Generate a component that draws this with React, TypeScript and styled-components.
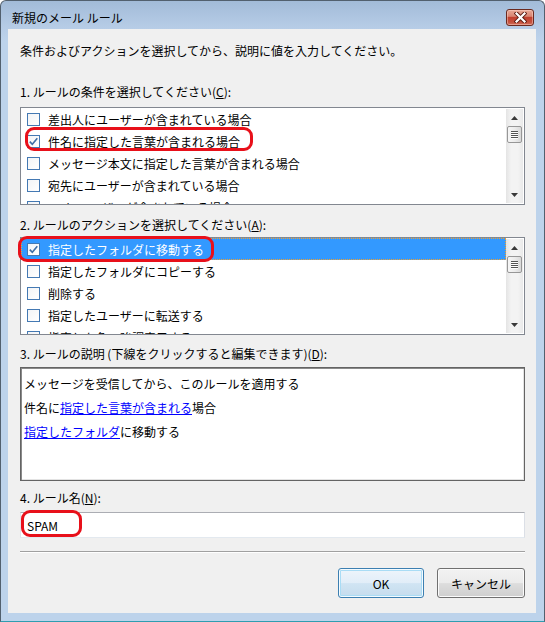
import React from 'react';
import styled, { createGlobalStyle } from 'styled-components';

const GlobalStyle = createGlobalStyle`
  html, body { margin: 0; padding: 0; background: #ffffff; }
  body {
    font-family: "Noto Sans CJK JP", "Noto Sans", "Liberation Sans", sans-serif;
    font-size: 12px;
    color: #000;
  }
  * { box-sizing: border-box; }
`;

const Window = styled.div`
  width: 545px;
  height: 622px;
  display: flex;
  flex-direction: column;
  border: 1px solid #52606e;
  border-bottom-color: #2f9db0;
  border-radius: 6px 6px 0 0;
  background: linear-gradient(to bottom, #a2bbd8 0px, #b6cce6 26px, #bdd3eb 40px, #bdd3eb 100%);
  overflow: hidden;
`;

const TitleBar = styled.div`
  height: 28px;
  display: flex;
  align-items: flex-start;
  padding: 9px 10px 0 11px;
`;

const TitleText = styled.div`
  line-height: 16px;
  font-size: 12px;
  color: #000;
`;

const CloseButton = styled.div`
  margin-left: auto;
  margin-top: -1px;
  width: 28px;
  height: 17px;
  border: 1px solid #6b2a1f;
  border-radius: 3px;
  background: linear-gradient(to bottom, #e9a996 0%, #d98572 42%, #c2412f 50%, #c4503d 80%, #d2715c 100%);
  box-shadow: inset 0 0 0 1px rgba(255, 220, 210, 0.45);
  display: flex;
  align-items: center;
  justify-content: center;
`;

const Body = styled.div`
  flex: 1;
  margin: 0 8px 8px 7px;
  background: #f0f0f0;
  padding: 14px 11px 0 12px;
  display: flex;
  flex-direction: column;
`;

const Text = styled.div<{ $mt?: number }>`
  line-height: 16px;
  margin-top: ${(p) => p.$mt ?? 0}px;
  white-space: nowrap;
`;

const Field = styled.div<{ $mt?: number }>`
  position: relative;
  margin-top: ${(p) => p.$mt ?? 0}px;
`;

const ListBox = styled.div`
  height: 98px;
  border: 1px solid #828790;
  background: #fff;
  display: flex;
  overflow: hidden;
`;

const Rows = styled.div`
  flex: 1;
  overflow: hidden;
`;

const Row = styled.div<{ $selected?: boolean }>`
  height: 22px;
  display: flex;
  align-items: center;
  gap: 8px;
  padding-left: 6px;
  white-space: nowrap;
  background: ${(p) => (p.$selected ? '#3399ff' : 'transparent')};
  color: ${(p) => (p.$selected ? '#ffffff' : '#000000')};
  outline: ${(p) => (p.$selected ? '1px dotted #f0a030' : 'none')};
  outline-offset: -1px;
`;

const Box = styled.span`
  flex: none;
  width: 13px;
  height: 13px;
  border: 1px solid #4479b3;
  background: linear-gradient(135deg, #f2f4f6, #ffffff);
  display: flex;
  align-items: center;
  justify-content: center;
`;

const ScrollBar = styled.div`
  width: 17px;
  margin: 1px 1px 1px 0;
  display: flex;
  flex-direction: column;
  background: linear-gradient(to right, #e4e4e4, #f3f3f3 30%, #f3f3f3 70%, #e9e9e9);
`;

const ArrowButton = styled.div`
  height: 17px;
  display: flex;
  align-items: center;
  justify-content: center;
`;

const Thumb = styled.div`
  height: 17px;
  margin: 0 1px;
  border: 1px solid #979797;
  border-radius: 2px;
  background: linear-gradient(to right, #f6f6f6, #ececec 50%, #d9d9d9);
  display: flex;
  flex-direction: column;
  align-items: center;
  justify-content: center;
  gap: 1px;
`;

const Grip = styled.span`
  width: 7px;
  height: 1px;
  background: #555;
  box-shadow: 0 1px 0 #fff;
`;

const Spacer = styled.div`
  flex: 1;
`;

const Ring = styled.div<{ $l: number; $t: number; $w: number; $h: number }>`
  position: absolute;
  left: ${(p) => p.$l}px;
  top: ${(p) => p.$t}px;
  width: ${(p) => p.$w}px;
  height: ${(p) => p.$h}px;
  border: 3px solid #e8101a;
  border-radius: 9px;
  pointer-events: none;
`;

const DescBox = styled.div`
  height: 114px;
  border: 1px solid #646464;
  box-shadow: inset 1px 1px 0 #8a8a8a, inset -1px -1px 0 #e3e3e3;
  background: #fff;
  padding: 4px 0 0 3px;
  line-height: 24px;
`;

const Link = styled.span`
  color: #0000ff;
  text-decoration: underline;
`;

const Input = styled.div`
  height: 26px;
  border: 1px solid #e3e9ef;
  border-top-color: #abadb3;
  border-left-color: #e2e3ea;
  border-right-color: #dbdfe6;
  background: #fff;
  padding-left: 6px;
  display: flex;
  align-items: center;
  font-size: 12px;
`;

const Separator = styled.div`
  margin-top: 13px;
  border-top: 1px solid #a0a0a0;
  border-bottom: 1px solid #ffffff;
`;

const ButtonRow = styled.div`
  margin-top: 15px;
  display: flex;
  justify-content: flex-end;
  gap: 13px;
`;

const Button = styled.div<{ $default?: boolean; $w: number }>`
  width: ${(p) => p.$w}px;
  height: 30px;
  border-radius: 3px;
  border: 1px solid ${(p) => (p.$default ? '#3c7fb1' : '#707070')};
  background: ${(p) =>
    p.$default
      ? 'linear-gradient(to bottom, #eef5fb 0%, #e1edf8 50%, #d0e4f3 52%, #c5dced 100%)'
      : 'linear-gradient(to bottom, #f2f2f2 0%, #ebebeb 50%, #dddddd 52%, #cfcfcf 100%)'};
  box-shadow: ${(p) =>
    p.$default ? 'inset 0 0 0 1px #f4fbff, inset 0 0 0 2px #a9dcf5' : 'inset 0 0 0 1px #fbfbfb'};
  display: flex;
  align-items: center;
  justify-content: center;
  font-size: 12px;
`;

const U = styled.span`
  text-decoration: underline;
`;

const Check = () => (
  <svg width="11" height="11" viewBox="0 0 11 11">
    <path d="M1.8 5.6 L4.3 8.3 L9.3 2.2" fill="none" stroke="#3f6ea6" strokeWidth="1.6" />
  </svg>
);

const UpArrow = () => (
  <svg width="7" height="4" viewBox="0 0 7 4">
    <path d="M0 4 L3.5 0 L7 4 Z" fill="#3a3a3a" />
  </svg>
);

const DownArrow = () => (
  <svg width="7" height="4" viewBox="0 0 7 4">
    <path d="M0 0 L7 0 L3.5 4 Z" fill="#3a3a3a" />
  </svg>
);

const CloseX = () => (
  <svg width="13" height="11" viewBox="0 0 13 11">
    <path d="M2.5 1.5 L10.5 9.5 M10.5 1.5 L2.5 9.5" stroke="#5a1c12" strokeWidth="4" strokeLinecap="square" />
    <path d="M2.5 1.5 L10.5 9.5 M10.5 1.5 L2.5 9.5" stroke="#ffffff" strokeWidth="2.2" strokeLinecap="square" />
  </svg>
);

type Item = { text: string; checked?: boolean; selected?: boolean };

const List = ({ items }: { items: Item[] }) => (
  <ListBox>
    <Rows>
      {items.map((it, i) => (
        <Row key={i} $selected={it.selected}>
          <Box>{it.checked ? <Check /> : null}</Box>
          <span>{it.text}</span>
        </Row>
      ))}
    </Rows>
    <ScrollBar>
      <ArrowButton>
        <UpArrow />
      </ArrowButton>
      <Thumb>
        <Grip />
        <Grip />
        <Grip />
        <Grip />
      </Thumb>
      <Spacer />
      <ArrowButton>
        <DownArrow />
      </ArrowButton>
    </ScrollBar>
  </ListBox>
);

const conditions: Item[] = [
  { text: '差出人にユーザーが含まれている場合' },
  { text: '件名に指定した言葉が含まれる場合', checked: true },
  { text: 'メッセージ本文に指定した言葉が含まれる場合' },
  { text: '宛先にユーザーが含まれている場合' },
  { text: 'CC にユーザーが含まれている場合' },
];

const actions: Item[] = [
  { text: '指定したフォルダに移動する', checked: true, selected: true },
  { text: '指定したフォルダにコピーする' },
  { text: '削除する' },
  { text: '指定したユーザーに転送する' },
  { text: '指定した色で強調表示する' },
];

export default function App() {
  return (
    <>
      <GlobalStyle />
      <Window>
        <TitleBar>
          <TitleText>新規のメール ルール</TitleText>
          <CloseButton>
            <CloseX />
          </CloseButton>
        </TitleBar>
        <Body>
          <Text>条件およびアクションを選択してから、説明に値を入力してください。</Text>

          <Text $mt={25}>
            1. ルールの条件を選択してください(<U>C</U>):
          </Text>
          <Field $mt={7}>
            <List items={conditions} />
            <Ring $l={5} $t={20} $w={228} $h={24} />
          </Field>

          <Text $mt={12}>
            2. ルールのアクションを選択してください(<U>A</U>):
          </Text>
          <Field $mt={4}>
            <List items={actions} />
            <Ring $l={-2} $t={-1} $w={196} $h={26} />
          </Field>

          <Text $mt={11}>
            3. ルールの説明 (下線をクリックすると編集できます)(<U>D</U>):
          </Text>
          <Field $mt={5}>
            <DescBox>
              <div>メッセージを受信してから、このルールを適用する</div>
              <div>
                件名に<Link>指定した言葉が含まれる</Link>場合
              </div>
              <div>
                <Link>指定したフォルダ</Link>に移動する
              </div>
            </DescBox>
          </Field>

          <Text $mt={9}>
            4. ルール名(<U>N</U>):
          </Text>
          <Field $mt={6}>
            <Input>SPAM</Input>
            <Ring $l={1} $t={-2} $w={61} $h={27} />
          </Field>

          <Separator />

          <ButtonRow>
            <Button $default $w={86}>
              OK
            </Button>
            <Button $w={88}>キャンセル</Button>
          </ButtonRow>
        </Body>
      </Window>
    </>
  );
}
